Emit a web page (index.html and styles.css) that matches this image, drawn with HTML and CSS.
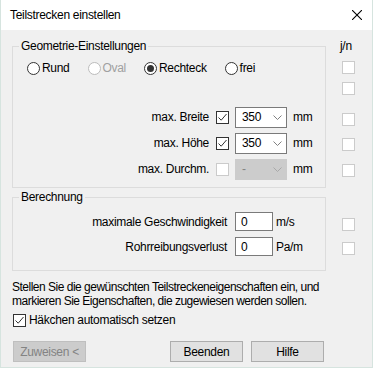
FILE: index.html
```html
<!DOCTYPE html>
<html lang="de">

<head>
    <meta charset="UTF-8">
    <title>Teilstrecken einstellen</title>
    <link rel="stylesheet" href="styles.css">
</head>

<body>

    <div class="dialog">
        <div class="titlebar">
            <span>Teilstrecken einstellen</span>
            <svg class="close" width="10" height="10" viewBox="0 0 10 10">
                <path d="M0 0 L10 10 M10 0 L0 10" stroke="#000" stroke-width="1.1" fill="none" />
            </svg>
        </div>

        <div class="content">

            <div class="section geo">
                <fieldset class="group">
                    <legend>Geometrie-Einstellungen</legend>
                    <div class="radios">
                        <span class="radio"><span class="dot"></span>Rund</span>
                        <span class="radio disabled"><span class="dot"></span>Oval</span>
                        <span class="radio selected"><span class="dot"></span>Rechteck</span>
                        <span class="radio"><span class="dot"></span>frei</span>
                    </div>
                    <div class="blank"></div>
                    <div class="row">
                        <span class="label">max. Breite</span>
                        <span class="check on">
                            <svg width="11" height="11" viewBox="0 0 11 11"><path d="M1.5 5.5 L4.2 8.2 L9.5 2" stroke="#333" stroke-width="1" fill="none" /></svg>
                        </span>
                        <div class="combo"><span>350</span><svg width="9" height="5" viewBox="0 0 9 5"><path d="M0.5 0.5 L4.5 4.5 L8.5 0.5" stroke="#808080" fill="none" /></svg></div>
                        <span class="unit">mm</span>
                    </div>
                    <div class="row">
                        <span class="label">max. Höhe</span>
                        <span class="check on">
                            <svg width="11" height="11" viewBox="0 0 11 11"><path d="M1.5 5.5 L4.2 8.2 L9.5 2" stroke="#333" stroke-width="1" fill="none" /></svg>
                        </span>
                        <div class="combo"><span>350</span><svg width="9" height="5" viewBox="0 0 9 5"><path d="M0.5 0.5 L4.5 4.5 L8.5 0.5" stroke="#808080" fill="none" /></svg></div>
                        <span class="unit">mm</span>
                    </div>
                    <div class="row">
                        <span class="label">max. Durchm.</span>
                        <span class="check"></span>
                        <div class="combo disabled"><span>-</span><svg width="9" height="5" viewBox="0 0 9 5"><path d="M0.5 0.5 L4.5 4.5 L8.5 0.5" stroke="#a8a8a8" fill="none" /></svg></div>
                        <span class="unit">mm</span>
                    </div>
                </fieldset>

                <div class="flags">
                    <span class="jn">j/n</span>
                    <span class="check"></span>
                    <span class="check"></span>
                    <span class="check"></span>
                    <span class="check"></span>
                    <span class="check"></span>
                </div>
            </div>

            <div class="section calc">
                <fieldset class="group">
                    <legend>Berechnung</legend>
                    <div class="row">
                        <span class="label">maximale Geschwindigkeit</span>
                        <input type="text" value="0">
                        <span class="unit">m/s</span>
                    </div>
                    <div class="row">
                        <span class="label">Rohrreibungsverlust</span>
                        <input type="text" value="0">
                        <span class="unit">Pa/m</span>
                    </div>
                </fieldset>

                <div class="flags">
                    <span class="check"></span>
                    <span class="check"></span>
                </div>
            </div>

            <p class="hint">
                Stellen Sie die gewünschten Teilstreckeneigenschaften ein, und<br>
                markieren Sie Eigenschaften, die zugewiesen werden sollen.
            </p>

            <div class="auto">
                <span class="check on">
                    <svg width="11" height="11" viewBox="0 0 11 11"><path d="M1.5 5.5 L4.2 8.2 L9.5 2" stroke="#333" stroke-width="1" fill="none" /></svg>
                </span>
                <span>Häkchen automatisch setzen</span>
            </div>

            <div class="buttons">
                <button class="disabled">Zuweisen &lt;</button>
                <button class="end">Beenden</button>
                <button>Hilfe</button>
            </div>

        </div>
    </div>

</body>

</html>
```

FILE: styles.css
```css
* {
    margin: 0;
    padding: 0;
    box-sizing: border-box;
}

body {
    font-family: 'Liberation Sans', Arial, sans-serif;
    font-size: 12px;
    letter-spacing: -0.3px;
    color: #000;
    background: #f0f0f0;
}

.dialog {
    width: 373px;
    height: 368px;
    background: #f0f0f0;
    border: 1px solid #d6e4df;
    border-top: none;
}

/* title bar */
.titlebar {
    height: 30px;
    background: #fff;
    display: flex;
    align-items: center;
    justify-content: space-between;
    padding: 0 10px 0 9px;
}

.close {
    display: block;
}

.content {
    padding: 9px 0 0 11px;
}

/* group boxes */
.section {
    display: flex;
    align-items: flex-start;
}

.group {
    width: 314px;
    min-width: 0;
    border: 1px solid #dcdcdc;
    padding: 4px 0 5px 0;
}

.group legend {
    margin-left: 6px;
    padding: 0 2px;
    line-height: 15px;
}

.calc {
    margin-top: 2px;
}

.calc .group {
    padding-bottom: 11px;
}

/* radio buttons */
.radios {
    display: flex;
    align-items: center;
    gap: 18px;
    height: 20px;
    padding-left: 14px;
}

.radio {
    display: flex;
    align-items: center;
    gap: 2px;
}

.radio .dot {
    width: 13px;
    height: 13px;
    border: 1px solid #333;
    border-radius: 50%;
    background: #fff;
    display: flex;
    align-items: center;
    justify-content: center;
}

.radio.selected .dot::after {
    content: '';
    width: 7px;
    height: 7px;
    border-radius: 50%;
    background: #333;
}

.radio.disabled {
    color: #a0a0a0;
}

.radio.disabled .dot {
    border-color: #bcbcbc;
}

.blank {
    height: 26px;
}

/* rows */
.row {
    display: flex;
    align-items: center;
    height: 26px;
}

.row .label {
    width: 196px;
    text-align: right;
}

.row .check {
    margin-left: 7px;
}

.row .unit {
    margin-left: 6px;
}

.calc .row {
    height: 25px;
}

.calc .row .label {
    width: 214px;
}

.calc .row input {
    margin-left: 8px;
}

.calc .row .unit {
    margin-left: 3px;
}

/* checkboxes */
.check {
    width: 13px;
    height: 13px;
    border: 1px solid #cbcbcb;
    background: #fff;
    display: flex;
    align-items: center;
    justify-content: center;
    flex-shrink: 0;
}

.check.on {
    border-color: #333;
}

.check svg {
    display: block;
}

/* combo boxes */
.combo {
    width: 52px;
    height: 21px;
    margin-left: 6px;
    border: 1px solid #7a7a7a;
    background: #fff;
    display: flex;
    align-items: center;
    justify-content: space-between;
    padding: 0 4px 0 6px;
}

.combo.disabled {
    background: #cccccc;
    border-color: #cccccc;
    color: #838383;
}

input {
    width: 38px;
    height: 19px;
    border: 1px solid #7a7a7a;
    background: #fff;
    font-family: 'Liberation Sans', Arial, sans-serif;
    font-size: 12px;
    padding: 0 5px;
    color: #000;
}

/* j/n column */
.flags {
    width: 13px;
    margin-left: 16px;
    display: flex;
    flex-direction: column;
}

.jn {
    line-height: 15px;
    margin-left: -2px;
    white-space: nowrap;
}

.geo .flags .check:nth-of-type(2) { margin-top: 7px; }
.geo .flags .check:nth-of-type(3) { margin-top: 8px; }
.geo .flags .check:nth-of-type(4) { margin-top: 18px; }
.geo .flags .check:nth-of-type(5) { margin-top: 12px; }
.geo .flags .check:nth-of-type(6) { margin-top: 13px; }

.calc .flags .check:nth-of-type(1) { margin-top: 28px; }
.calc .flags .check:nth-of-type(2) { margin-top: 11px; }

/* bottom part */
.hint {
    margin-top: 9px;
    line-height: 14px;
    letter-spacing: -0.5px;
}

.auto {
    display: flex;
    align-items: center;
    gap: 3px;
    height: 16px;
    margin-top: 4px;
    margin-left: 1px;
}

.buttons {
    display: flex;
    margin-top: 13px;
    margin-left: 1px;
}

button {
    width: 73px;
    height: 21px;
    background: #e1e1e1;
    border: 1px solid #adadad;
    font-family: 'Liberation Sans', Arial, sans-serif;
    font-size: 12px;
    letter-spacing: -0.3px;
    color: #000;
}

button.disabled {
    background: #cccccc;
    border-color: #bfbfbf;
    color: #838383;
}

button.end {
    margin-left: 84px;
    margin-right: 8px;
}
```
